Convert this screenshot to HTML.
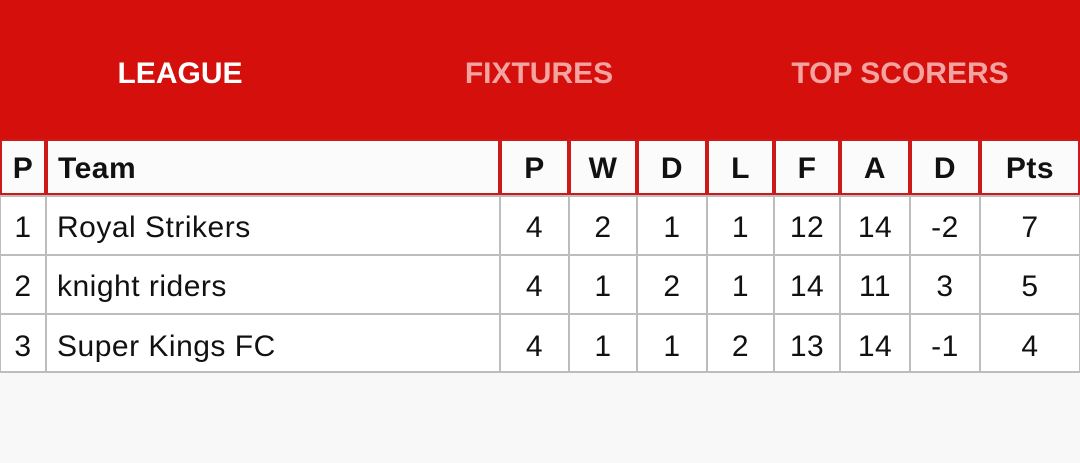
<!DOCTYPE html><html><head><style>
body{margin:0;width:1080px;height:463px;background:#f8f8f8;font-family:"Liberation Sans",sans-serif;position:relative;overflow:hidden}
.bar{position:absolute;left:0;top:0;width:1080px;height:139px;background:#d50f0b}
.tab{position:absolute;top:54px;width:360px;text-align:center;font-size:30px;font-weight:bold;line-height:40px}
.c{position:absolute;box-sizing:border-box;display:flex;align-items:center;justify-content:center;font-size:30px;color:#111;background:#fff;padding-top:5px;letter-spacing:0.5px}
.h{border:2px solid #cc1a1a;font-weight:bold;background:#fbfbfb;padding-top:3px}
.d{border:1px solid #bdbdbd;border-width:2px 1px 0 1px}
.l{justify-content:flex-start;padding-left:10px}
</style></head><body>
<div class="bar"></div>
<div class="tab" style="left:0;color:#fff">LEAGUE</div>
<div class="tab" style="left:359px;color:#f3a3a0">FIXTURES</div>
<div class="tab" style="left:720px;color:#f3a3a0">TOP SCORERS</div>
<div id="t"></div>
<script>
var xs=[0,46,500,569,637,707,774,840,910,980,1080];
var rows=[["P","Team","P","W","D","L","F","A","D","Pts"],
["1","Royal Strikers","4","2","1","1","12","14","-2","7"],
["2","knight riders","4","1","2","1","14","11","3","5"],
["3","Super Kings FC","4","1","1","2","13","14","-1","4"]];
var ys=[139,195,254,313,373];var h="";
for(var r=0;r<4;r++)for(var c=0;c<10;c++){
var cls="c "+(r==0?"h":"d")+(c==1?" l":"");
h+='<div class="'+cls+'" style="left:'+xs[c]+'px;top:'+ys[r]+'px;width:'+(xs[c+1]-xs[c])+'px;height:'+(ys[r+1]-ys[r])+'px">'+rows[r][c]+'</div>';}
h+='<div style="position:absolute;left:0;top:371px;width:1080px;height:2px;background:#bdbdbd"></div>';
document.getElementById("t").innerHTML=h;
</script>
</body></html>
